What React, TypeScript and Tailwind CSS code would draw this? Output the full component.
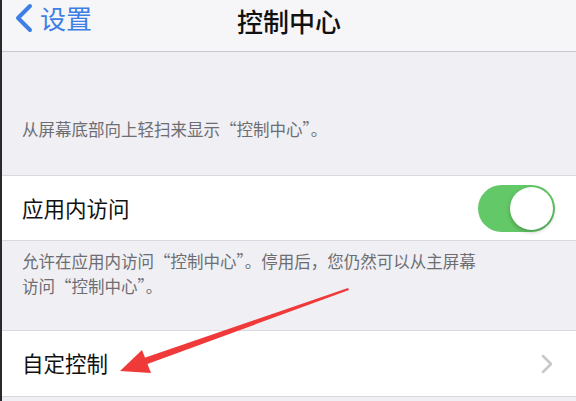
import React from "react";

const font = { fontFamily: '"Noto Sans CJK SC", "Noto Sans", sans-serif' };

export default function App() {
  return (
    <div className="relative flex h-[401px] w-[576px] overflow-hidden bg-[#efeff4]" style={font}>
      <div className="w-[2px] shrink-0 bg-[#2a2a2e]" />
      <div className="flex flex-1 flex-col">
        {/* Nav bar */}
        <div className="relative flex h-[52px] shrink-0 items-center border-b border-[#c8c7cc] bg-[#f6f6f9]">
          <div className="absolute left-[12px] top-[3px] flex items-center gap-[6px]">
            <svg width="20" height="30" viewBox="0 0 20 30">
              <path d="M16 3 L4 15 L16 27" fill="none" stroke="#3d7fe6" strokeWidth="4" strokeLinecap="round" strokeLinejoin="round" />
            </svg>
            <span className="text-[26px] leading-[30px] text-[#3d7fe6]">设置</span>
          </div>
          <div className="w-full pb-[10px] text-center text-[26px] font-medium leading-[30px] text-[#111]">控制中心</div>
        </div>
        {/* Gray section */}
        <div className="flex h-[123px] shrink-0 items-end pb-[35px] pl-[20px]">
          <span className="text-[16.5px] leading-[22px] text-[#6d6d72]">从屏幕底部向上轻扫来显示“控制中心”。</span>
        </div>
        {/* Row 1 */}
        <div className="flex h-[66px] shrink-0 items-center justify-between border-y border-[#d9d9de] bg-white pl-[20px] pr-[21px]">
          <span className="text-[21.5px] text-[#111]">应用内访问</span>
          <div className="relative h-[47px] w-[77px] rounded-full bg-[#63c867]">
            <div className="absolute right-[2px] top-[2px] h-[43px] w-[43px] rounded-full bg-white shadow-[0_2px_4px_rgba(0,0,0,0.25)]" />
          </div>
        </div>
        {/* Description */}
        <div className="h-[89px] shrink-0 pl-[20px] pt-[8px]">
          <p className="w-[466px] text-[16.5px] leading-[25px] text-[#6d6d72]">
            允许在应用内访问“控制中心”。停用后，您仍然可以从主屏幕访问“控制中心”。
          </p>
        </div>
        {/* Row 2 */}
        <div className="flex h-[67px] shrink-0 items-center justify-between border-y border-[#d9d9de] bg-white pl-[20px] pr-[22px]">
          <span className="text-[21.5px] text-[#111]">自定控制</span>
          <svg width="14" height="22" viewBox="0 0 14 22">
            <path d="M3 3 L11 11 L3 19" fill="none" stroke="#c7c7cc" strokeWidth="2.5" strokeLinecap="round" strokeLinejoin="round" />
          </svg>
        </div>
      </div>
      {/* Red annotation arrow */}
      <svg className="pointer-events-none absolute left-0 top-0" width="576" height="401" viewBox="0 0 576 401">
        <polygon points="348,288 349,290 146,364.5 144,358" fill="#f03a3a" />
        <polygon points="120,371 142,350 151,373" fill="#f03a3a" />
      </svg>
    </div>
  );
}
